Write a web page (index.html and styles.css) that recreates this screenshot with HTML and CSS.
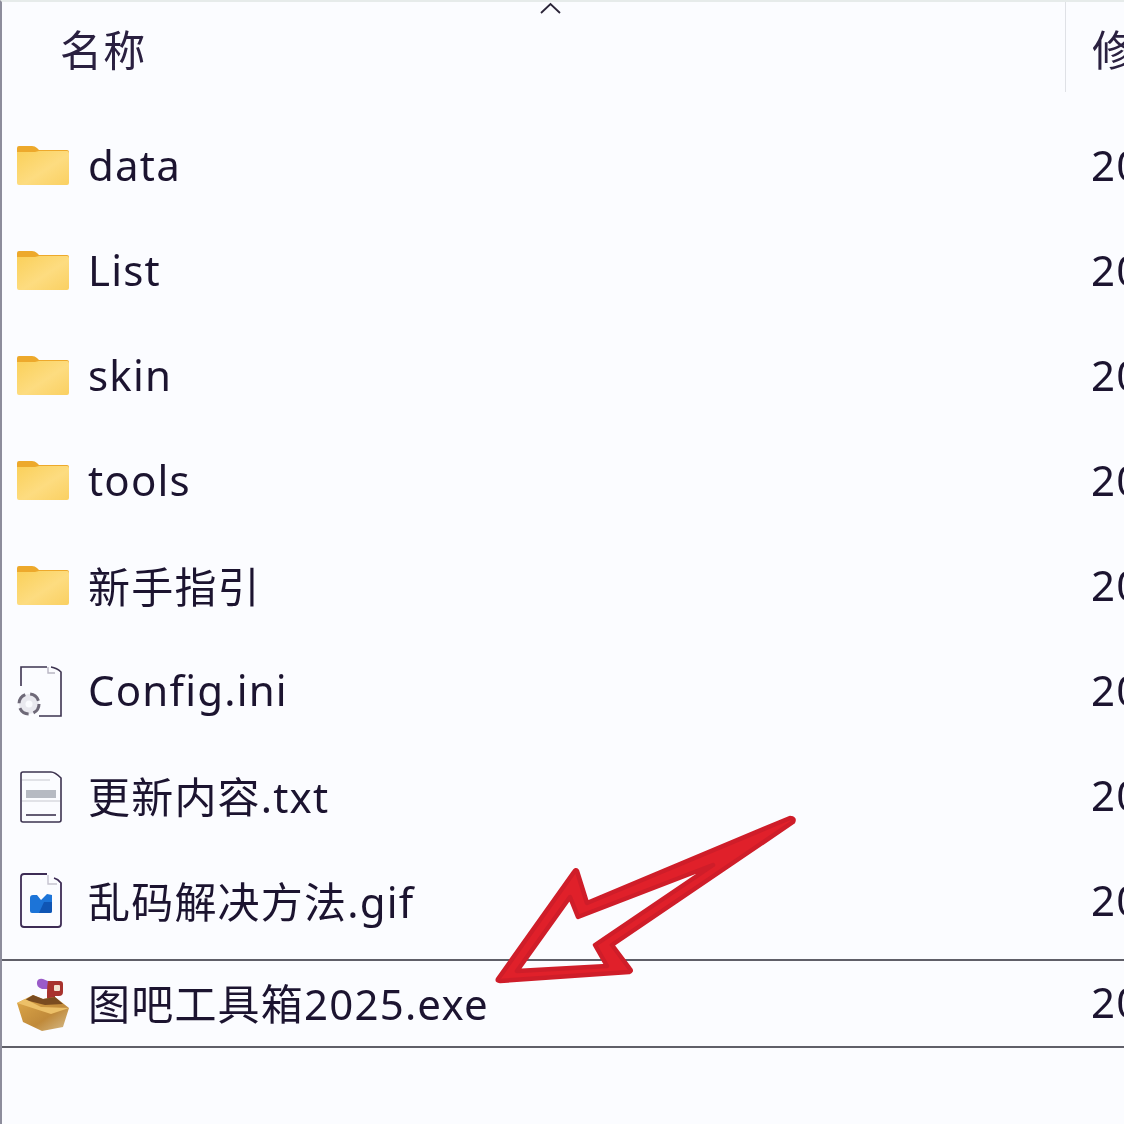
FILE: index.html
```html
<!DOCTYPE html>
<html lang="zh-CN">
<head>
<meta charset="utf-8">
<title>文件列表</title>
<link rel="stylesheet" href="styles.css">
</head>
<body>
<svg class="defs" width="0" height="0" aria-hidden="true">
  <defs>
    <linearGradient id="folderBody" x1="0" y1="0" x2="1" y2="1">
      <stop offset="0" stop-color="#fad05a"/>
      <stop offset="0.55" stop-color="#fddc80"/>
      <stop offset="1" stop-color="#fad062"/>
    </linearGradient>
    <linearGradient id="boxBody" x1="0" y1="0" x2="1" y2="1">
      <stop offset="0" stop-color="#dfa94a"/>
      <stop offset="0.6" stop-color="#c08a3a"/>
      <stop offset="1" stop-color="#d6bd8e"/>
    </linearGradient>
    <symbol id="i-folder" viewBox="0 0 52 52">
      <path d="M0 7 Q0 5 2 5 H15 Q18 5 20 7 L22 9 H50 Q52 9 52 11 V15 H0 Z" fill="#eda92c"/>
      <path d="M0 11 H18 L22 10 H50 Q52 10 52 12 V42 Q52 44 50 44 H2 Q0 44 0 42 Z" fill="url(#folderBody)"/>
    </symbol>
    <symbol id="i-ini" viewBox="0 0 52 52">
      <path d="M4 20 V1 H30 M34 1 Q40 2 44 6 V50 H22" fill="none" stroke="#3d3350" stroke-width="1.6"/>
      <path d="M31 1 V7 H38" fill="none" stroke="#b9b6c4" stroke-width="1.4"/>
      <circle cx="12" cy="38" r="10" fill="#e9e9ef" stroke="#6e6978" stroke-width="3" stroke-dasharray="11 5"/>
      <circle cx="12" cy="38" r="3.500" fill="#fbfcff"/>
    </symbol>
    <symbol id="i-txt" viewBox="0 0 52 52">
      <path d="M4 3 Q4 1 6 1 H34 Q38 1 44 7 V49 Q44 51 42 51 H6 Q4 51 4 49 Z" fill="none" stroke="#3d3350" stroke-width="1.6"/>
      <path d="M5 9 H33 M5 30 H43" stroke="#c8c8d0" stroke-width="1.2"/>
      <rect x="9" y="19" width="30" height="8" fill="#b6bac2"/>
      <path d="M9 44 H39" stroke="#3d3350" stroke-width="1.6"/>
    </symbol>
    <symbol id="i-gif" viewBox="0 0 52 52" overflow="visible">
      <path d="M4 1 Q4 -2 7 -2 H30 M37 2 Q41 3 44 7 V48 Q44 51 41 51 H7 Q4 51 4 48 V1" fill="none" stroke="#3d2c55" stroke-width="1.8"/>
      <path d="M31 -1 V8 H40" fill="none" stroke="#c6c4d0" stroke-width="1.4"/>
      <path d="M13 22 Q13 19 16 19 H20 L24 24 L30 18 L35 19 V35 Q35 37 33 37 H15 Q13 37 13 35 Z" fill="#1c74d8"/>
      <path d="M22 37 L27 26 L35 26 V35 Q35 37 33 37 Z" fill="#0f55b4"/>
    </symbol>
    <symbol id="i-exe" viewBox="0 0 52 52" overflow="visible">
      <path d="M20 4 Q21 0 26 1 L33 4 V11 L25 11 Q19 9 20 4 Z" fill="#9a5bc8"/>
      <path d="M31 3 H43 Q46 3 46 6 V14 Q46 18 42 18 H38 V26 H30 V14 Q30 8 31 3 Z" fill="#a8332e"/>
      <rect x="37" y="7" width="6" height="6" rx="1" fill="#f3e3d0"/>
      <path d="M0 25 L16 17 L26 21 L38 19 L52 30 L46 49 L25 53 L6 44 Z" fill="url(#boxBody)"/>
      <path d="M8 22 L16 17 L26 21 L38 19 L46 26 L28 27 Z" fill="#7a4c20"/>
      <path d="M0 25 L8 21 L24 29 L52 30 L34 36 Z" fill="#ecc068"/>
    </symbol>
  </defs>
</svg>

<main class="explorer">
  <header class="head">
    <div class="head-name"><span class="label">名称</span></div>
    <div class="head-date"><span class="label">修改日期</span></div>
    <svg class="sort" width="24" height="12" viewBox="0 0 24 12" aria-hidden="true"><path d="M2 11 L11.500 2 L21 11" fill="none" stroke="#2a2438" stroke-width="1.800"/></svg>
  </header>
  <ul class="list">
    <li class="row"><span class="name"><svg class="icon"><use href="#i-folder"/></svg><span class="label">data</span></span><span class="date">2025/3/12</span></li>
    <li class="row"><span class="name"><svg class="icon"><use href="#i-folder"/></svg><span class="label">List</span></span><span class="date">2025/3/12</span></li>
    <li class="row"><span class="name"><svg class="icon"><use href="#i-folder"/></svg><span class="label">skin</span></span><span class="date">2025/3/12</span></li>
    <li class="row"><span class="name"><svg class="icon"><use href="#i-folder"/></svg><span class="label">tools</span></span><span class="date">2025/3/12</span></li>
    <li class="row"><span class="name"><svg class="icon"><use href="#i-folder"/></svg><span class="label">新手指引</span></span><span class="date">2025/3/12</span></li>
    <li class="row"><span class="name"><svg class="icon"><use href="#i-ini"/></svg><span class="label">Config.ini</span></span><span class="date">2025/3/12</span></li>
    <li class="row"><span class="name"><svg class="icon"><use href="#i-txt"/></svg><span class="label">更新内容.txt</span></span><span class="date">2025/3/12</span></li>
    <li class="row"><span class="name"><svg class="icon"><use href="#i-gif"/></svg><span class="label">乱码解决方法.gif</span></span><span class="date">2025/3/12</span></li>
    <li class="row row-selected"><span class="name"><svg class="icon"><use href="#i-exe"/></svg><span class="label">图吧工具箱2025.exe</span></span><span class="date">2025/3/12</span></li>
  </ul>
  <svg class="arrow" width="330" height="200" viewBox="480 800 330 200" aria-hidden="true">
    <path fill-rule="evenodd" d="M793 822 Q795 818 790 818 L587 903 L577 871 Q576 869 574 872 L498 979 Q497 981 500 981 L629 972 Q632 971 630 969 L612 945 Z M713 865 L578 917 L570 897 L517 971 L607 966 L595 945 Z"/>
  </svg>
</main>
</body>
</html>
```

FILE: styles.css
```css
html, body {
  margin: 0;
  height: 100%;
  overflow: hidden;
  background: #fbfcff;
}

.defs {
  position: absolute;
}

.explorer {
  position: relative;
  box-sizing: border-box;
  width: 1124px;
  height: 1124px;
  overflow: hidden;
  border-top: 2px solid #e6ebea;
  border-left: 2px solid #8d8d9c;
  font-family: "Noto Sans", "Noto Sans CJK SC", sans-serif;
  font-size: 42px;
  letter-spacing: 1.2px;
  color: #1c1430;
  filter: blur(0.5px);
}

.head {
  position: relative;
  display: flex;
  height: 112px;
  align-items: flex-start;
}

.head-name {
  flex: none;
  box-sizing: border-box;
  width: 1064px;
  height: 90px;
  padding: 18px 0 0 58px;
  line-height: 60px;
  border-right: 1px solid #dfe1e6;
  color: #2a2040;
}

.head-date {
  flex: none;
  padding: 18px 0 0 26px;
  line-height: 60px;
  white-space: nowrap;
  color: #2a2040;
}

.sort {
  position: absolute;
  left: 537px;
  top: 0;
}

.list {
  margin: 0;
  padding: 0;
  list-style: none;
}

.row {
  display: flex;
  height: 105px;
  align-items: center;
  white-space: nowrap;
}

.name {
  display: flex;
  flex: 0 0 1089px;
  align-items: center;
  gap: 19px;
  box-sizing: border-box;
  padding-left: 15px;
}

.label,
.date {
  padding-bottom: 5px;
}

.icon {
  flex: none;
  width: 52px;
  height: 52px;
  overflow: visible;
}

.row-selected {
  box-sizing: border-box;
  height: 89px;
  margin: 5px 0 0 -2px;
  border: 2px solid #5f5f68;
  border-right: 0;
}

.arrow {
  position: absolute;
  left: 478px;
  top: 798px;
  overflow: visible;
}

.arrow path {
  fill: #e0202a;
  stroke: #cf1d29;
  stroke-width: 4.500;
  stroke-linejoin: round;
}
```
